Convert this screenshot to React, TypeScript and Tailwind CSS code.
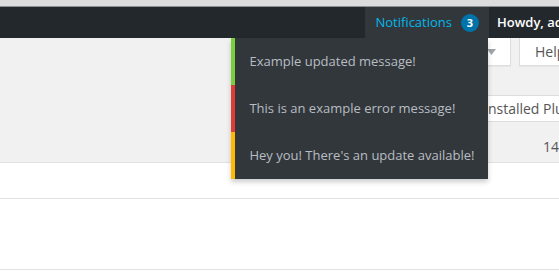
import React from "react";

const font = { fontFamily: '"Open Sans", "Noto Sans", sans-serif' };

export default function App() {
  const items = [
    { text: "Example updated message!", border: "border-[#7ad03a]" },
    { text: "This is an example error message!", border: "border-[#dd3d36]" },
    { text: "Hey you! There's an update available!", border: "border-[#ffba00]" },
  ];
  return (
    <div className="w-[559px] h-[271px] overflow-hidden bg-white relative text-[13px]" style={font}>
      <div className="h-[7px] bg-[#dcdcdc] border-b border-[#8f8f8f]" />
      <div className="h-[31px] bg-[#23282d] flex justify-end relative z-20">
        <div className="relative h-full bg-[#32373c] flex items-center pl-[10px] pr-[10px] gap-[9px] ml-auto shrink-0">
          <span className="text-[#00b9eb] leading-none">Notifications</span>
          <span className="w-[18px] h-[18px] rounded-full bg-[#0073aa] text-white text-[11px] font-bold flex items-center justify-center leading-none">3</span>
          <div className="absolute top-full left-[-134px] w-[257px] bg-[#32373c] shadow-[0_3px_5px_rgba(0,0,0,0.2)]">
            {items.map((it) => (
              <div key={it.text} className={`h-[47px] border-l-4 ${it.border} flex items-center pl-[14px] text-[#b8bdc2] whitespace-nowrap`}>
                {it.text}
              </div>
            ))}
          </div>
        </div>
        <div className="h-full flex items-center pl-[8px] text-white font-semibold whitespace-nowrap w-[70px] shrink-0 overflow-hidden">
          Howdy, admin
        </div>
      </div>
      <div className="bg-[#f1f1f1] h-[125px] border-b border-[#e1e1e1] relative z-10">
        <div className="flex h-[28px]">
          <div className="ml-[440px] w-[71px] shrink-0 h-full bg-white border border-t-0 border-[#ddd] shadow-[0_1px_1px_rgba(0,0,0,0.04)] flex items-center justify-end pr-[14px]">
            <svg width="9" height="6" viewBox="0 0 9 6"><path d="M0 0h9L4.5 6z" fill="#a0a5aa" /></svg>
          </div>
          <div className="ml-[8px] w-[60px] shrink-0 h-full bg-white border border-t-0 border-[#ddd] shadow-[0_1px_1px_rgba(0,0,0,0.04)] flex items-center pl-[15px] text-[#555] text-[14px] whitespace-nowrap">
            Help
          </div>
        </div>
        <div className="flex mt-[29px]">
          <div className="ml-[473px] h-[27px] shrink-0 bg-white border border-[#ddd] flex items-center pl-[10px] text-[#555] text-[14px] whitespace-nowrap w-[130px]">
            Installed Plugins
          </div>
        </div>
        <div className="flex mt-[16px] pl-[543px] text-[#555] text-[14px] leading-[18px] whitespace-nowrap">14</div>
      </div>
      <div className="h-[36px] border-b border-[#e1e1e1]" />
      <div className="h-[71px] border-b border-[#e1e1e1]" />
    </div>
  );
}
